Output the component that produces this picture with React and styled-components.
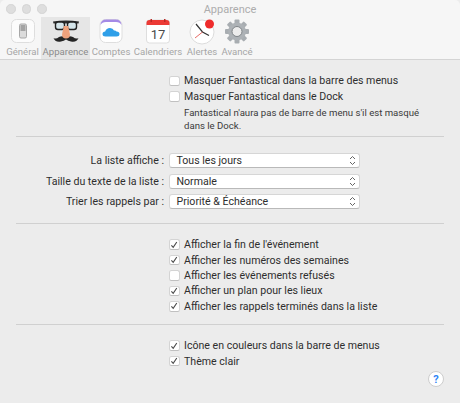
import React from "react";
import styled, { createGlobalStyle } from "styled-components";

const Global = createGlobalStyle`
  html, body { margin: 0; padding: 0; background: #ececec; }
  body { font-family: "Roboto", "Liberation Sans", sans-serif; }
`;

const Window = styled.div`
  width: 460px;
  height: 403px;
  overflow: hidden;
  position: relative;
  background: #ececec;
  color: #2e2e2e;
  font-size: 10.6px;
`;

const Header = styled.header`
  height: 60px;
  box-sizing: border-box;
  background: #f6f6f6;
  border-bottom: 1px solid #d4d4d4;
  border-top-left-radius: 5px;
  border-top-right-radius: 5px;
`;

const TitleBar = styled.div`
  height: 17px;
  position: relative;
  display: flex;
  align-items: center;
  justify-content: center;
  padding-top: 1px;
  box-sizing: border-box;
  color: #adadad;
  font-size: 11px;
`;

const Lights = styled.div`
  position: absolute;
  left: 6px;
  top: 4px;
  display: flex;
  gap: 6px;
`;

const Light = styled.span`
  width: 9.5px;
  height: 9.5px;
  border-radius: 50%;
  background: #dedede;
  border: 0.5px solid #d4d4d4;
  box-sizing: border-box;
`;

const Tabs = styled.nav`
  display: flex;
  padding-left: 4px;
  height: 42px;
`;

const Tab = styled.div`
  width: ${(p) => p.$w}px;
  display: flex;
  flex-direction: column;
  align-items: center;
  background: ${(p) => (p.$active ? "#e6e6e6" : "transparent")};
  color: ${(p) => (p.$active ? "#8c8c8c" : "#a6a6a6")};
  font-size: 9.6px;
  white-space: nowrap;
`;

const TabIcon = styled.svg`
  width: 30px;
  height: 30px;
  display: block;
  flex: none;
  margin-top: -1px;
`;

const TabLabel = styled.span`
  line-height: 12px;
`;

const Main = styled.main`
  padding: 0 16px;
`;

const Section = styled.section`
  box-sizing: border-box;
  height: ${(p) => p.$h}px;
  padding-top: ${(p) => p.$top}px;
  border-bottom: ${(p) => (p.$last ? "none" : "1px solid #d0d0d0")};
`;

const CheckRow = styled.label`
  height: ${(p) => p.$h || 15.4}px;
  display: flex;
  align-items: center;
  gap: 4.5px;
  padding-left: 153px;
`;

const Box = styled.span`
  width: 10.5px;
  height: 10.5px;
  flex: none;
  box-sizing: border-box;
  border-radius: 2.5px;
  background: #fff;
  border: 1px solid #d4d4d4;
  border-bottom-color: #c0c0c0;
  display: flex;
  align-items: center;
  justify-content: center;
`;

const Note = styled.p`
  margin: 2px 0 0;
  padding-left: 168px;
  width: 252px;
  font-size: 9.6px;
  line-height: 13px;
  color: #3a3a3a;
`;

const SelectGrid = styled.div`
  display: grid;
  grid-template-columns: 148px 191px;
  column-gap: 5px;
  row-gap: 5.5px;
  align-items: center;
`;

const SelectLabel = styled.span`
  text-align: right;
  white-space: nowrap;
`;

const Select = styled.div`
  height: 15px;
  box-sizing: border-box;
  background: #fff;
  border-radius: 3px;
  border: 1px solid #d6d6d6;
  border-bottom-color: #b9b9b9;
  display: flex;
  align-items: center;
  justify-content: space-between;
  padding: 0 3px 0 6.5px;
`;

const HelpButton = styled.div`
  position: absolute;
  left: 428px;
  top: 371px;
  width: 16px;
  height: 16px;
  box-sizing: border-box;
  border-radius: 50%;
  background: #fff;
  border: 1px solid #cdcdcd;
  color: #2f86f6;
  font-size: 11px;
  font-weight: 700;
  display: flex;
  align-items: center;
  justify-content: center;
`;

const Tick = () => (
  <svg width="8" height="8" viewBox="0 0 8 8" fill="none">
    <path d="M1.4 4.4 L3.2 6.4 L6.8 1" stroke="#4a4a4a" strokeWidth="1.1" />
  </svg>
);

const Check = ({ on, h, children }) => (
  <CheckRow $h={h}>
    <Box>{on && <Tick />}</Box>
    {children}
  </CheckRow>
);

const Updown = () => (
  <svg width="7" height="11" viewBox="0 0 7 11" fill="none">
    <path d="M1 4 L3.5 1.5 L6 4 M1 7 L3.5 9.5 L6 7" stroke="#555" strokeWidth="0.9" />
  </svg>
);

const GeneralIcon = () => (
  <TabIcon viewBox="0 0 30 30">
    <rect x="3.5" y="3.5" width="23" height="23" rx="5" fill="#fcfcfc" stroke="#dedede" />
    <rect x="11.5" y="8" width="7" height="14" rx="1.5" fill="#dcdcdc" stroke="#a8a8a8" />
    <rect x="12.5" y="9" width="5" height="6" fill="#a4a4a4" />
  </TabIcon>
);

const DisguiseIcon = () => (
  <TabIcon viewBox="0 0 30 30">
    <path d="M2 5.5 Q15 3.5 28 5.5 L27.5 7.5 L2.5 7.5 Z" fill="#2b2b2b" />
    <rect x="4.5" y="6" width="9" height="7.5" rx="2.5" fill="#d5e5ea" stroke="#222" strokeWidth="1.4" />
    <rect x="16.5" y="6" width="9" height="7.5" rx="2.5" fill="#d5e5ea" stroke="#222" strokeWidth="1.4" />
    <path d="M2.5 22 Q4 26.5 10 25.5 Q13 25 15 23.5 Q17 25 20 25.5 Q26 26.5 27.5 22 Q25 23.5 22 21 Q18 19.5 15 21.5 Q12 19.5 8 21 Q5 23.5 2.5 22 Z" fill="#262626" />
    <path d="M12.8 10 L17.2 10 L19 18.5 Q19 22.5 15 22.5 Q11 22.5 11 18.5 Z" fill="#efa27c" />
  </TabIcon>
);

const CloudIcon = () => (
  <TabIcon viewBox="0 0 30 30">
    <rect x="4" y="3.5" width="22" height="23" rx="5.5" fill="#fff" stroke="#dedede" />
    <path d="M4.5 9 Q5 3.5 10 3.5 L20 3.5 Q25 3.5 25.5 9 Q24 6 20 6 L10 6 Q6 6 4.5 9 Z" fill="#a58ae6" />
    <path d="M9.5 20.5 Q6.5 20.5 6.5 18 Q6.5 15.7 9.2 15.5 Q10.2 12 14 12 Q17 12 18 14.5 Q19.5 14 20.5 15.5 Q23.5 15.5 23.5 18 Q23.5 20.5 20.5 20.5 Z" fill="#2f9fe8" />
  </TabIcon>
);

const CalendarIcon = () => (
  <TabIcon viewBox="0 0 30 30">
    <rect x="3.5" y="4" width="23" height="23" rx="3" fill="#fff" stroke="#dedede" />
    <path d="M3.5 9 L3.5 7 Q3.5 4 6.5 4 L23.5 4 Q26.5 4 26.5 7 L26.5 9 Z" fill="#ec3a35" />
    <rect x="7.5" y="3" width="1.5" height="3" fill="#b92a26" />
    <rect x="21" y="3" width="1.5" height="3" fill="#b92a26" />
    <text x="15" y="23" textAnchor="middle" fontSize="13" fill="#4a4a4a" fontFamily="Roboto, sans-serif">17</text>
  </TabIcon>
);

const ClockIcon = () => (
  <TabIcon viewBox="0 0 30 30">
    <circle cx="15" cy="16" r="12" fill="#fff" stroke="#dcdcdc" />
    <path d="M9 8 L15.5 16 L22 19.5" stroke="#333" strokeWidth="1.2" fill="none" />
    <path d="M15.5 16 L8 22" stroke="#e0443e" strokeWidth="0.8" />
    <circle cx="22.5" cy="8" r="4.5" fill="#ee2b2b" />
  </TabIcon>
);

const GearIcon = () => (
  <TabIcon viewBox="0 0 30 30">
    <g fill="#a8adb1">
      {[0, 45, 90, 135, 180, 225, 270, 315].map((a) => (
        <rect key={a} x="12.5" y="3.5" width="5" height="6" rx="1" transform={`rotate(${a} 15 15.5)`} />
      ))}
    </g>
    <circle cx="15" cy="15.5" r="9" fill="#adb2b6" />
    <circle cx="15" cy="15.5" r="5" fill="#ececec" stroke="#7f8488" strokeWidth="1" />
  </TabIcon>
);

const tabs = [
  { label: "Général", w: 37, Icon: GeneralIcon },
  { label: "Apparence", w: 49, Icon: DisguiseIcon, active: true },
  { label: "Comptes", w: 42, Icon: CloudIcon },
  { label: "Calendriers", w: 52, Icon: CalendarIcon },
  { label: "Alertes", w: 36, Icon: ClockIcon },
  { label: "Avancé", w: 34, Icon: GearIcon },
];

export default function App() {
  return (
    <Window>
      <Global />
      <Header>
        <TitleBar>
          <Lights>
            <Light />
            <Light />
            <Light />
          </Lights>
          Apparence
        </TitleBar>
        <Tabs>
          {tabs.map(({ label, w, Icon, active }) => (
            <Tab key={label} $w={w} $active={active}>
              <Icon />
              <TabLabel>{label}</TabLabel>
            </Tab>
          ))}
        </Tabs>
      </Header>
      <Main>
        <Section $h={77} $top={13}>
          <Check h={15.5}>Masquer Fantastical dans la barre des menus</Check>
          <Check h={15.5}>Masquer Fantastical dans le Dock</Check>
          <Note>Fantastical n'aura pas de barre de menu s'il est masqué dans le Dock.</Note>
        </Section>
        <Section $h={87} $top={16}>
          <SelectGrid>
            <SelectLabel>La liste affiche :</SelectLabel>
            <Select>Tous les jours<Updown /></Select>
            <SelectLabel>Taille du texte de la liste :</SelectLabel>
            <Select>Normale<Updown /></Select>
            <SelectLabel>Trier les rappels par :</SelectLabel>
            <Select>Priorité &amp; Échéance<Updown /></Select>
          </SelectGrid>
        </Section>
        <Section $h={101} $top={13}>
          <Check on>Afficher la fin de l'événement</Check>
          <Check on>Afficher les numéros des semaines</Check>
          <Check>Afficher les événements refusés</Check>
          <Check on>Afficher un plan pour les lieux</Check>
          <Check on>Afficher les rappels terminés dans la liste</Check>
        </Section>
        <Section $h={60} $top={13} $last>
          <Check on>Icône en couleurs dans la barre de menus</Check>
          <Check on>Thème clair</Check>
        </Section>
      </Main>
      <HelpButton>?</HelpButton>
    </Window>
  );
}
